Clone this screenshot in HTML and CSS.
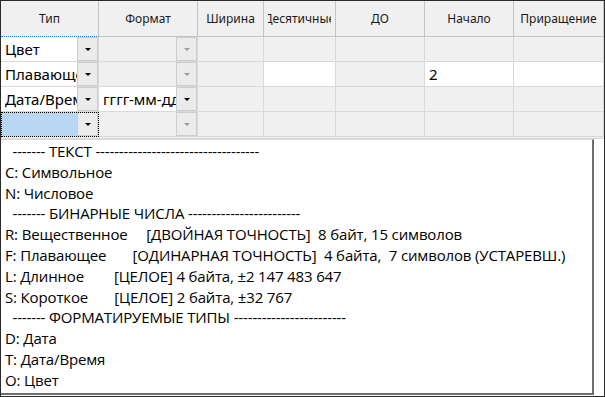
FILE: index.html
```html
<html>
    <head>
        <meta charset="UTF-8">
        <title>Поля</title>
        <link rel="stylesheet" href="styles.css">
    </head>
    <body>
        <div class="window">
            <div class="grid">
                <div class="hcell sorted"><div class="clip">Тип</div></div>
                <div class="hcell"><div class="clip">Формат</div></div>
                <div class="hcell"><div class="clip">Ширина</div></div>
                <div class="hcell"><div class="clip">Десятичные</div></div>
                <div class="hcell"><div class="clip">ДО</div></div>
                <div class="hcell"><div class="clip">Начало</div></div>
                <div class="hcell"><div class="clip">Приращение</div></div>

                <div class="cell combo"><span class="val">Цвет</span><i class="btn"></i></div>
                <div class="cell combo off"><span class="val"></span><i class="btn"></i></div>
                <div class="cell off"></div>
                <div class="cell off"></div>
                <div class="cell off"></div>
                <div class="cell off"></div>
                <div class="cell off"></div>

                <div class="cell combo"><span class="val">Плавающее</span><i class="btn"></i></div>
                <div class="cell combo off"><span class="val"></span><i class="btn"></i></div>
                <div class="cell off"></div>
                <div class="cell"></div>
                <div class="cell off"></div>
                <div class="cell"><span class="val">2</span></div>
                <div class="cell"></div>

                <div class="cell combo"><span class="val">Дата/Время</span><i class="btn"></i></div>
                <div class="cell combo"><span class="val">гггг-мм-дд</span><i class="btn"></i></div>
                <div class="cell off"></div>
                <div class="cell off"></div>
                <div class="cell off"></div>
                <div class="cell off"></div>
                <div class="cell off"></div>

                <div class="cell combo current"><span class="val"></span><i class="btn"></i></div>
                <div class="cell combo off"><span class="val"></span><i class="btn"></i></div>
                <div class="cell off"></div>
                <div class="cell off"></div>
                <div class="cell off"></div>
                <div class="cell off"></div>
                <div class="cell off"></div>
            </div>
            <div class="list">
<div class="line">  ------- ТЕКСТ -----------------------------------</div>
<div class="line">C: Символьное</div>
<div class="line">N: Числовое</div>
<div class="line">  ------- БИНАРНЫЕ ЧИСЛА ------------------------</div>
<div class="line">R: Вещественное     [ДВОЙНАЯ ТОЧНОСТЬ]  8 байт, 15 символов</div>
<div class="line">F: Плавающее       [ОДИНАРНАЯ ТОЧНОСТЬ]  4 байта,  7 символов (УСТАРЕВШ.)</div>
<div class="line">L: Длинное        [ЦЕЛОЕ] 4 байта, ±2 147 483 647</div>
<div class="line">S: Короткое       [ЦЕЛОЕ] 2 байта, ±32 767</div>
<div class="line">  ------- ФОРМАТИРУЕМЫЕ ТИПЫ ------------------------</div>
<div class="line">D: Дата</div>
<div class="line">T: Дата/Время</div>
<div class="line">O: Цвет</div>
            </div>
        </div>
    </body>
</html>
```

FILE: styles.css
```css
* {
    box-sizing: border-box;
}
body {
    margin: 0;
    background: #ffffff;
}
.window {
    width: 605px;
    height: 397px;
    border: 1px solid #2a2a2a;
    background: #ffffff;
    display: flex;
    flex-direction: column;
    overflow: hidden;
}
.grid {
    display: grid;
    grid-template-columns: 98px 99px 66px 72px 89px 89px 1fr;
    grid-template-rows: 36px 25px 25px 25px 25px;
    background: #f0f0f0;
    border-bottom: 1px solid #d8d8d8;
    padding-bottom: 1px;
    font-family: "Noto Sans", "Open Sans", sans-serif;
}
.hcell {
    background: #f0f0f0;
    border-right: 1px solid #c4c4c4;
    border-bottom: 1px solid #c4c4c4;
    display: flex;
    align-items: center;
    padding: 0 4px;
    font-size: 12px;
    color: #1a1a1a;
}
.hcell .clip {
    flex: 1;
    min-width: 0;
    overflow: hidden;
    white-space: nowrap;
    display: flex;
    justify-content: center;
}
.hcell:last-child { border-right: none; }
.hcell.sorted {
    border-bottom: 1px dotted #2f7bd6;
}
.cell {
    background: #ffffff;
    border-right: 1px solid #d9d9d9;
    border-bottom: 1px solid #d9d9d9;
    display: flex;
    align-items: center;
    overflow: hidden;
    white-space: nowrap;
    font-size: 15px;
    color: #000000;
}
.cell.off { background: #f0f0f0; }
.cell .val {
    flex: 1;
    overflow: hidden;
    padding-left: 4px;
    padding-bottom: 1px;
}
.cell.current {
    background: #b7d7f5;
    outline: 1px dotted #000000;
    outline-offset: -1px;
}
.btn {
    width: 21px;
    height: 24px;
    flex: none;
    background: #ebebeb;
    border: 1px solid #cdcdcd;
    display: flex;
    align-items: center;
    justify-content: center;
}
.btn::after {
    content: "";
    border-left: 3px solid transparent;
    border-right: 3px solid transparent;
    border-top: 3px solid #000000;
}
.off .btn::after { border-top-color: #9a9a9a; }
.list {
    width: 593px;
    height: 256px;
    border-top: 1px solid #dcdcdc;
    border-right: 2px solid #6e6e6e;
    border-bottom: 2px solid #6e6e6e;
    padding: 1px 0 0 4px;
    font-family: "Open Sans", "Noto Sans", sans-serif;
    font-size: 15px;
    letter-spacing: -0.15px;
    color: #000000;
}
.line {
    height: 20.8px;
    line-height: 20.8px;
    white-space: pre;
}
```
